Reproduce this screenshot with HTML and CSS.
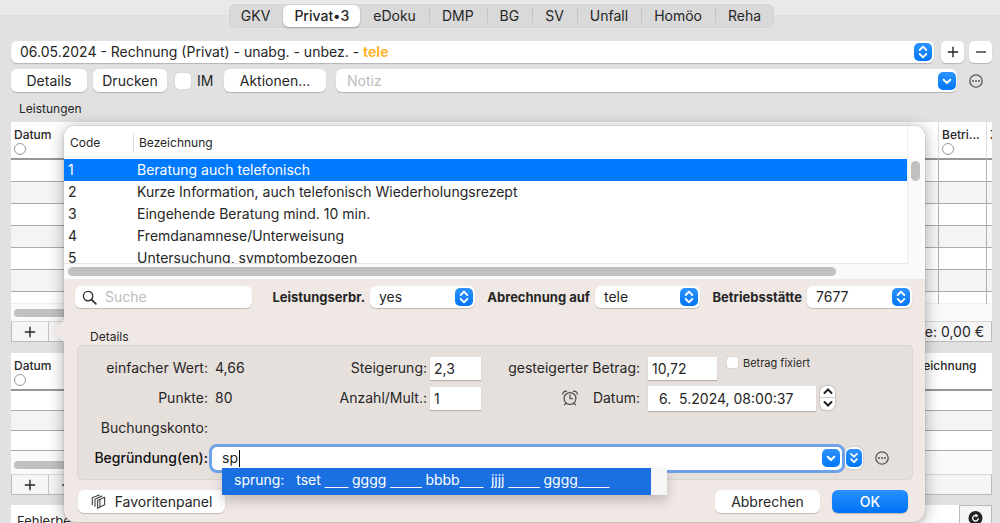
FILE: index.html
```html
<!DOCTYPE html>
<html lang="de">
<head>
<meta charset="utf-8">
<title>Rechnung (Privat)</title>
<link rel="stylesheet" href="styles.css">
</head>
<body>
<svg class="defs" aria-hidden="true">
  <symbol id="updown" viewBox="0 0 18 18"><path d="M5.7 7 9 3.7 12.300 7M5.700 11 9 14.300 12.300 11" fill="none" stroke="currentColor" stroke-width="1.900" stroke-linecap="round" stroke-linejoin="round"/></symbol>
  <symbol id="down" viewBox="0 0 18 18"><path d="M5.700 7.700 9 11 12.300 7.700" fill="none" stroke="currentColor" stroke-width="2" stroke-linecap="round" stroke-linejoin="round"/></symbol>
  <symbol id="double" viewBox="0 0 18 18"><path d="M5.700 4.400 9 7.700 12.300 4.400M5.700 10.300 9 13.600 12.300 10.300" fill="none" stroke="currentColor" stroke-width="2" stroke-linecap="round" stroke-linejoin="round"/></symbol>
  <symbol id="more" viewBox="0 0 16 16"><circle cx="8" cy="8" r="6.200" fill="none" stroke="currentColor" stroke-width="1.300"/><circle cx="5" cy="8" r="1"/><circle cx="8" cy="8" r="1"/><circle cx="11" cy="8" r="1"/></symbol>
  <symbol id="plus" viewBox="0 0 16 16"><path d="M8 2.800V13.200M2.800 8H13.200" stroke="currentColor" stroke-width="1.400"/></symbol>
  <symbol id="minus" viewBox="0 0 16 16"><path d="M3 8H13" stroke="currentColor" stroke-width="1.300"/></symbol>
</svg>

<main class="window">
  <header class="tabbar">
    <nav class="tabs" role="tablist">
      <button class="tab" role="tab">GKV</button>
      <button class="tab active" role="tab" aria-selected="true">Privat•3</button>
      <button class="tab" role="tab">eDoku</button>
      <button class="tab" role="tab">DMP</button>
      <button class="tab" role="tab">BG</button>
      <button class="tab" role="tab">SV</button>
      <button class="tab" role="tab">Unfall</button>
      <button class="tab" role="tab">Homöo</button>
      <button class="tab" role="tab">Reha</button>
    </nav>
  </header>

  <div class="toolbar invoice-bar">
    <button class="invoice" aria-haspopup="listbox"><span>06.05.2024 - Rechnung (Privat) - unabg. - unbez. - <b>tele</b></span><svg class="badge"><use href="#updown"/></svg></button>
    <button class="square" aria-label="Hinzufügen"><svg class="icon"><use href="#plus"/></svg></button>
    <button class="square" aria-label="Entfernen"><svg class="icon"><use href="#minus"/></svg></button>
  </div>

  <div class="toolbar action-bar">
    <button class="push details">Details</button>
    <button class="push print">Drucken</button>
    <label class="im"><input type="checkbox" class="check large">IM</label>
    <button class="push actions">Aktionen...</button>
    <div class="note">
      <input type="text" placeholder="Notiz" aria-label="Notiz">
      <svg class="badge"><use href="#down"/></svg>
    </div>
    <button class="more" aria-label="Mehr"><svg class="icon"><use href="#more"/></svg></button>
  </div>

  <h2 class="section-title">Leistungen</h2>

  <section class="panel services">
    <table class="grid">
      <colgroup><col><col class="col-place"><col class="col-rest"></colgroup>
      <thead><tr><th>Datum<i class="ring"></i></th><th>Betri...<i class="ring"></i></th><th>Z</th></tr></thead>
      <tbody>
        <tr><td></td><td></td><td></td></tr>
        <tr><td></td><td></td><td></td></tr>
        <tr><td></td><td></td><td></td></tr>
        <tr><td></td><td></td><td></td></tr>
        <tr><td></td><td></td><td></td></tr>
        <tr><td></td><td></td><td></td></tr>
        <tr class="last"><td></td><td></td><td></td></tr>
      </tbody>
    </table>
    <div class="track"><div class="thumb"></div></div>
    <div class="panel-foot">
      <button class="cell" aria-label="Leistung hinzufügen"><svg class="icon"><use href="#plus"/></svg></button>
      <button class="cell" aria-label="Leistung entfernen"><svg class="icon"><use href="#minus"/></svg></button>
      <span class="sum">Summe: 0,00 €</span>
    </div>
  </section>

  <section class="panel diagnoses">
    <table class="grid plain">
      <colgroup><col><col class="col-name"></colgroup>
      <thead><tr><th>Datum<i class="ring"></i></th><th>Bezeichnung</th></tr></thead>
      <tbody>
        <tr><td></td><td></td></tr>
        <tr><td></td><td></td></tr>
        <tr><td></td><td></td></tr>
      </tbody>
    </table>
    <div class="track tall"><div class="thumb"></div></div>
    <div class="panel-foot">
      <button class="cell" aria-label="Diagnose hinzufügen"><svg class="icon"><use href="#plus"/></svg></button>
      <button class="cell" aria-label="Diagnose entfernen"><svg class="icon"><use href="#minus"/></svg></button>
    </div>
  </section>

  <section class="errors">
    <span>Fehlerbe</span>
    <button class="refresh" aria-label="Aktualisieren"><svg viewBox="0 0 16 16"><circle cx="8" cy="8" r="7.500" fill="#222"/><path d="M11 8.300A3 3 0 1 1 8.800 5.300" fill="none" stroke="#fff" stroke-width="1.400"/><path d="M8 3.200 11 5.600 8 7.600Z" fill="#fff"/></svg></button>
  </section>
</main>

<div class="popover" role="dialog" aria-label="Leistung">
  <svg class="arrow" viewBox="0 0 16 32"><path d="M16 1C15.500 6 12 8 8 11.500L2 15Q0 16 2 17L8 20.500C12 24 15.500 26 16 31Z" fill="#f0e8e5"/></svg>
  <div class="catalog">
    <div class="list">
      <table>
        <thead><tr><th class="code">Code</th><th>Bezeichnung</th></tr></thead>
        <tbody>
          <tr class="selected"><td>1</td><td>Beratung auch telefonisch</td></tr>
          <tr><td>2</td><td>Kurze Information, auch telefonisch Wiederholungsrezept</td></tr>
          <tr><td>3</td><td>Eingehende Beratung mind. 10 min.</td></tr>
          <tr><td>4</td><td>Fremdanamnese/Unterweisung</td></tr>
          <tr><td>5</td><td>Untersuchung, symptombezogen</td></tr>
        </tbody>
      </table>
    </div>
    <div class="vtrack"><div class="vthumb"></div></div>
    <div class="htrack"><div class="hthumb"></div></div>
  </div>

  <div class="filters">
    <div class="search">
      <svg viewBox="0 0 16 16"><circle cx="6.500" cy="6.500" r="5" fill="none" stroke="#333" stroke-width="1.500"/><path d="M10.200 10.200 14.800 14.800" stroke="#333" stroke-width="1.800" stroke-linecap="round"/></svg>
      <input type="search" placeholder="Suche" aria-label="Suche">
    </div>
    <label for="provider">Leistungserbr.</label>
    <div class="pick"><select id="provider"><option>yes</option></select><svg class="badge"><use href="#updown"/></svg></div>
    <label for="billing">Abrechnung auf</label>
    <div class="pick"><select id="billing"><option>tele</option></select><svg class="badge"><use href="#updown"/></svg></div>
    <label for="site">Betriebsstätte</label>
    <div class="pick"><select id="site"><option>7677</option></select><svg class="badge"><use href="#updown"/></svg></div>
  </div>

  <h3 class="group-title">Details</h3>
  <div class="group">
    <span class="lab">einfacher Wert:</span><span class="val">4,66</span>
    <label class="lab" for="factor">Steigerung:</label><div class="field"><input id="factor" class="box" value="2,3"></div>
    <label class="lab" for="amount">gesteigerter Betrag:</label>
    <div class="tail"><input id="amount" class="box sum-box" value="10,72"><label class="fixed"><input type="checkbox" class="check">Betrag fixiert</label></div>

    <span class="lab">Punkte:</span><span class="val">80</span>
    <label class="lab" for="count">Anzahl/Mult.:</label><div class="field"><input id="count" class="box" value="1"></div>
    <div class="lab when">
      <svg viewBox="0 0 18 18"><g fill="none" stroke="#555" stroke-width="1.300" stroke-linecap="round"><circle cx="9" cy="9.500" r="5.900"/><path d="M9 6V9.700H11.500M5 14 3.500 15.800M13 14 14.500 15.800M1.800 5.200C1.600 3.200 3.600 1.800 5.500 2.400M16.200 5.200C16.400 3.200 14.400 1.800 12.500 2.400"/></g></svg>
      <label for="date">Datum:</label>
    </div>
    <div class="tail"><input id="date" class="box date-box" value="6.  5.2024, 08:00:37">
      <div class="stepper">
        <button aria-label="Später"><svg viewBox="0 0 10 8"><path d="M1.500 6 5 2.500 8.500 6"/></svg></button>
        <button aria-label="Früher"><svg viewBox="0 0 10 8"><path d="M1.500 2 5 5.500 8.500 2"/></svg></button>
      </div>
    </div>

    <span class="lab wide-row">Buchungskonto:</span>

    <label class="lab strong" for="reason">Begründung(en):</label>
    <div class="reason">
      <div class="combo">
        <input id="reason" value="sp" autocomplete="off"><i class="caret"></i>
        <svg class="badge"><use href="#down"/></svg>
        <div class="suggest" role="listbox"><div class="option" role="option" aria-selected="true">sprung:&nbsp;&nbsp; tset <i>___</i> gggg <i>____</i> bbbb<i>___</i>&nbsp; jjjj <i>____</i> gggg<i>____</i></div></div>
      </div>
      <button class="expand" aria-label="Alle Begründungen"><svg class="badge"><use href="#double"/></svg></button>
      <button class="more" aria-label="Mehr"><svg class="icon"><use href="#more"/></svg></button>
    </div>
  </div>

  <div class="buttons">
    <button class="push favorites"><svg viewBox="0 0 16 16"><g fill="none" stroke="#444" stroke-width="1.200" stroke-linejoin="round"><path d="M7 7 14.500 3.500V11.500L7 15.200ZM4.200 13.500V5.500L12 2M1.400 11.800V4L9.300 .700"/><path d="M9.500 6V14"/></g></svg>Favoritenpanel</button>
    <button class="push cancel">Abbrechen</button>
    <button class="push ok">OK</button>
  </div>
</div>
</body>
</html>
```
FILE: styles.css
```css
* { box-sizing: border-box; }
html { height: 100%; }
body {
  margin: 0;
  height: 100%;
  position: relative;
  overflow: hidden;
  background: #e1e1e1;
  color: #262626;
  font: 14px/20px Inter, "Liberation Sans", sans-serif;
}
button, input, select { font: inherit; color: inherit; margin: 0; padding: 0; border: 0; outline: 0; }
button { background: none; white-space: nowrap; }
.defs { position: absolute; width: 0; height: 0; }
.icon { display: block; width: 16px; height: 16px; }
.badge { display: block; width: 18px; height: 18px; flex: none; border-radius: 5px; background: linear-gradient(#2e93ff, #0076f8); color: #fff; }

/* Tabs */
.tabbar { display: flex; justify-content: center; height: 30px; padding: 4px 0 0 3px; background: linear-gradient(#e9e9e9 15px, #dcdcdc 15px, #e1e1e1 16px); }
.tabs { display: flex; height: 24px; border-radius: 7px; background: #d9d9d9; box-shadow: inset 0 0 0 1px #d3d3d3; }
.tab { position: relative; height: 24px; padding: 0 13px 0 12px; }
.tab.active { margin: 1px 0; height: 22px; padding: 0 11px; background: #fff; border-radius: 6px; box-shadow: 0 1px 2px #0004; font-weight: 500; }
.tab + .tab:not(.active) { border-left: 1px solid transparent; border-image: linear-gradient(transparent 5px, #c4c4c4 5px, #c4c4c4 18px, transparent 18px) 1; }
.tab.active + .tab:not(.active) { border-image: none; }

/* Toolbars */
.toolbar { display: flex; align-items: center; padding: 0 8px 0 11px; }
.invoice-bar { margin-top: 11px; }
.invoice { display: flex; flex: 1; align-items: center; justify-content: space-between; height: 22px; padding: 0 2px 0 9px; border-radius: 6px; background: #fff; box-shadow: 0 1px 1px #0003; }
.invoice b { color: #fdb52e; }
.square { display: grid; place-items: center; width: 23px; height: 22px; margin-left: 5px; border-radius: 5px; background: #fff; box-shadow: 0 1px 1px #0003; }
.invoice + .square { margin-left: 7px; }
.action-bar { margin-top: 6px; }
.push { height: 23px; border-radius: 6px; background: #fff; box-shadow: 0 1px 1px #0003; }
.details { width: 76px; }
.print { width: 74px; margin-left: 6px; }
.im { display: flex; align-items: center; gap: 6px; width: 57px; padding-left: 8px; }
.check { appearance: none; flex: none; width: 11px; height: 11px; border-radius: 2px; background: #fff; box-shadow: 0 0 1px #0005; }
.check.large { width: 16px; height: 16px; border-radius: 4px; }
.actions { width: 102px; }
.note { display: flex; flex: 1; align-items: center; height: 23px; margin: 0 11px 0 10px; padding: 0 1px 0 11px; border-radius: 6px; background: #fff; box-shadow: 0 1px 1px #0003; }
.note input { flex: 1; min-width: 0; background: none; }
::placeholder { color: #bdbdbd; opacity: 1; }
.more { color: #555; fill: #555; margin-right: 8px; }
.section-title { margin: 8px 0 5px 19px; font-size: 12px; line-height: 17px; font-weight: 400; }

/* Background panels */
.panel { margin: 0 8px 0 11px; background: #fff; }
.grid { width: 100%; table-layout: fixed; border-collapse: separate; border-spacing: 0; background: #fff; }
.col-place { width: 48px; }
.col-rest { width: 6px; }
.col-name { width: 93px; }
.grid th { height: 38px; padding: 4px 0 0 3px; vertical-align: top; text-align: left; font-size: 12px; line-height: 17px; font-weight: 500; border-bottom: 2px solid #979797; overflow: hidden; white-space: nowrap; }
.grid th + th, .grid td + td { border-left: 1px solid #b0b0b0; }
.grid th + th { border-left-color: #dcdcdc; }
.grid td { height: 22px; padding: 0; border-bottom: 1px solid #aaa; }
.grid tr:nth-child(even) td { background: #f3f4f3; }
.grid .last td { height: 12px; border-bottom-color: #eee; }
.grid.plain td { height: 20px; }
.grid.plain th + th, .grid.plain td + td { border-left: 0; }
.ring { display: block; width: 12px; height: 12px; border: 1px solid #999; border-radius: 50%; background: #fff; }
.track { height: 17px; padding: 5px 3px; background: #fafafa; }
.track.tall { height: 23px; padding-top: 10px; }
.thumb { width: 60%; height: 8px; border-radius: 4px; background: #c1c1c1; }
.panel-foot { display: flex; height: 21px; background: #f5f5f5; border: 1px solid #bbb; border-top-color: #d8d8d8; }
.cell { display: grid; place-items: center; width: 37px; border-right: 1px solid #c4c4c4; }
.sum { margin-left: auto; padding-right: 7px; }
.diagnoses { margin-top: 11px; }
.errors { display: flex; justify-content: space-between; height: 40px; margin: 10px 8px 0 11px; background: #fff; font-size: 13px; }
.errors span { padding: 6px; }
.refresh { display: flex; align-items: flex-start; width: 33px; height: 40px; padding: 4px 8px; background: #f5f5f5; border: 1px solid #bbb; }
.refresh svg { display: block; width: 16px; height: 16px; }

/* Popover */
.popover { position: absolute; top: 126px; left: 64px; right: 75px; border-radius: 11px; background: #f0e8e5; box-shadow: 0 0 1px #0008, 0 2px 16px #0005; }
.arrow { position: absolute; left: -15px; top: 189px; width: 16px; height: 32px; }
.catalog { display: grid; grid-template-columns: 1fr 17px; grid-template-rows: 138px 15px; border-radius: 11px 11px 0 0; background: #fafafa; overflow: hidden; }
.list { overflow: hidden; background: #fff; border-bottom: 1px solid #e6e6e6; border-right: 1px solid #eee; }
.list table { width: 100%; border-collapse: collapse; }
.list th { height: 33px; padding: 0 6px; text-align: left; font-size: 12px; font-weight: 400; }
.list th + th { background: linear-gradient(#ddd, #ddd) 0 8px / 1px 18px no-repeat; }
.code { width: 69px; }
.list td { height: 22px; padding: 0 4px; line-height: 22px; white-space: nowrap; }
.selected { background: #007aff; color: #fff; }
.vtrack { padding: 35px 4px 0 3px; background: linear-gradient(#fff 33px, #fafafa 33px); }
.vthumb { width: 9px; height: 20px; border-radius: 5px; background: #c1c1c1; }
.htrack { grid-column: 1 / 3; padding: 3px 4px; }
.hthumb { width: 90%; height: 9px; border-radius: 5px; background: #c1c1c1; }

.filters { display: grid; grid-template-columns: 177px 118fr 105px 120fr 105px 107fr 105px; align-items: center; padding: 7px 13px 0 11px; }
.filters label { padding-right: 5px; text-align: right; font-size: 13px; font-weight: 700; white-space: nowrap; }
.search { display: flex; align-items: center; height: 22px; padding: 0 7px; gap: 8px; border-radius: 6px; background: #fff; box-shadow: 0 1px 1px #0003; }
.search svg { flex: none; width: 15px; height: 15px; }
.search input { flex: 1; min-width: 0; background: none; }
.pick { display: grid; align-items: center; height: 22px; border-radius: 6px; background: #fff; box-shadow: 0 1px 1px #0003; }
.pick > * { grid-area: 1 / 1; }
.pick select { appearance: none; height: 22px; padding-left: 9px; background: none; }
.pick .badge { justify-self: end; margin-right: 2px; pointer-events: none; }

.group-title { margin: 21px 0 0 26px; font-size: 12px; line-height: 16px; font-weight: 400; }
.group { display: grid; grid-template-columns: 131px 1fr 97px 54px 159px 273px; grid-auto-rows: 30px; align-items: center; margin: 0 12px 0 13px; padding: 8px 0 7px; border-radius: 5px; background: #e6e0dd; box-shadow: inset 0 0 0 1px #dcd6d3; }
.lab { text-align: right; white-space: nowrap; }
.strong { font-weight: 500; color: #111; }
.val { padding-left: 7px; }
.field { padding-left: 3px; }
.box { display: block; width: 51px; height: 23px; padding: 0 4px; background: #fff; box-shadow: 0 1px 1px #0003; }
.tail { display: flex; padding-left: 8px; }
.sum-box { width: 69px; }
.fixed { display: flex; gap: 5px; align-items: center; height: 12px; margin-left: 10px; font-size: 11px; }
.when { display: flex; justify-content: flex-end; align-items: center; gap: 14px; }
.when svg { width: 18px; height: 18px; }
.date-box { width: 168px; height: 25px; padding-left: 11px; white-space: pre; }
.stepper { display: grid; width: 15px; height: 24px; margin-left: 4px; border-radius: 6px; background: #fff; box-shadow: 0 0 2px #0006; }
.stepper button { display: grid; place-items: center; }
.stepper button + button { border-top: 1px solid #ccc; }
.stepper svg { width: 10px; height: 8px; fill: none; stroke: #222; stroke-width: 2; stroke-linecap: round; }
.wide-row { grid-column: 1; }
.wide-row + .lab { grid-column: 1; }
.reason { grid-column: 2 / 7; display: flex; align-items: center; padding-left: 1px; }
.combo { position: relative; display: flex; flex: 1; align-items: center; height: 29px; padding: 0 2px 0 10px; border: 3px solid #6ea2e8; border-radius: 8px; background: #fff; }
.combo input { width: 17px; background: none; }
.combo .badge { margin-left: auto; }
.caret { width: 1px; height: 17px; background: #000; }
.suggest { position: absolute; top: 21px; left: 10px; width: 445px; padding-right: 16px; background: #f6f6f6; box-shadow: 0 6px 12px #0003; }
.option { height: 27px; padding-left: 12px; line-height: 23px; background: #1a70e0; color: #fff; white-space: nowrap; overflow: hidden; }
.option i { font-family: "Liberation Sans", sans-serif; font-style: normal; }
.expand { display: block; padding: 2px 1px; border-radius: 6px; background: #fff; box-shadow: 0 0 2px #0004; }
.expand .badge { width: 16px; }
.reason .more { margin: 0 23px 0 11px; }

.buttons { display: flex; gap: 12px; padding: 10px 17px 9px 14px; }
.favorites { display: flex; align-items: center; justify-content: center; gap: 9px; width: 147px; margin-right: auto; }
.favorites svg { width: 15px; height: 15px; }
.cancel { width: 105px; }
.ok { width: 76px; background: linear-gradient(#2790ff, #0073f5); color: #fff; font-weight: 500; }
```
